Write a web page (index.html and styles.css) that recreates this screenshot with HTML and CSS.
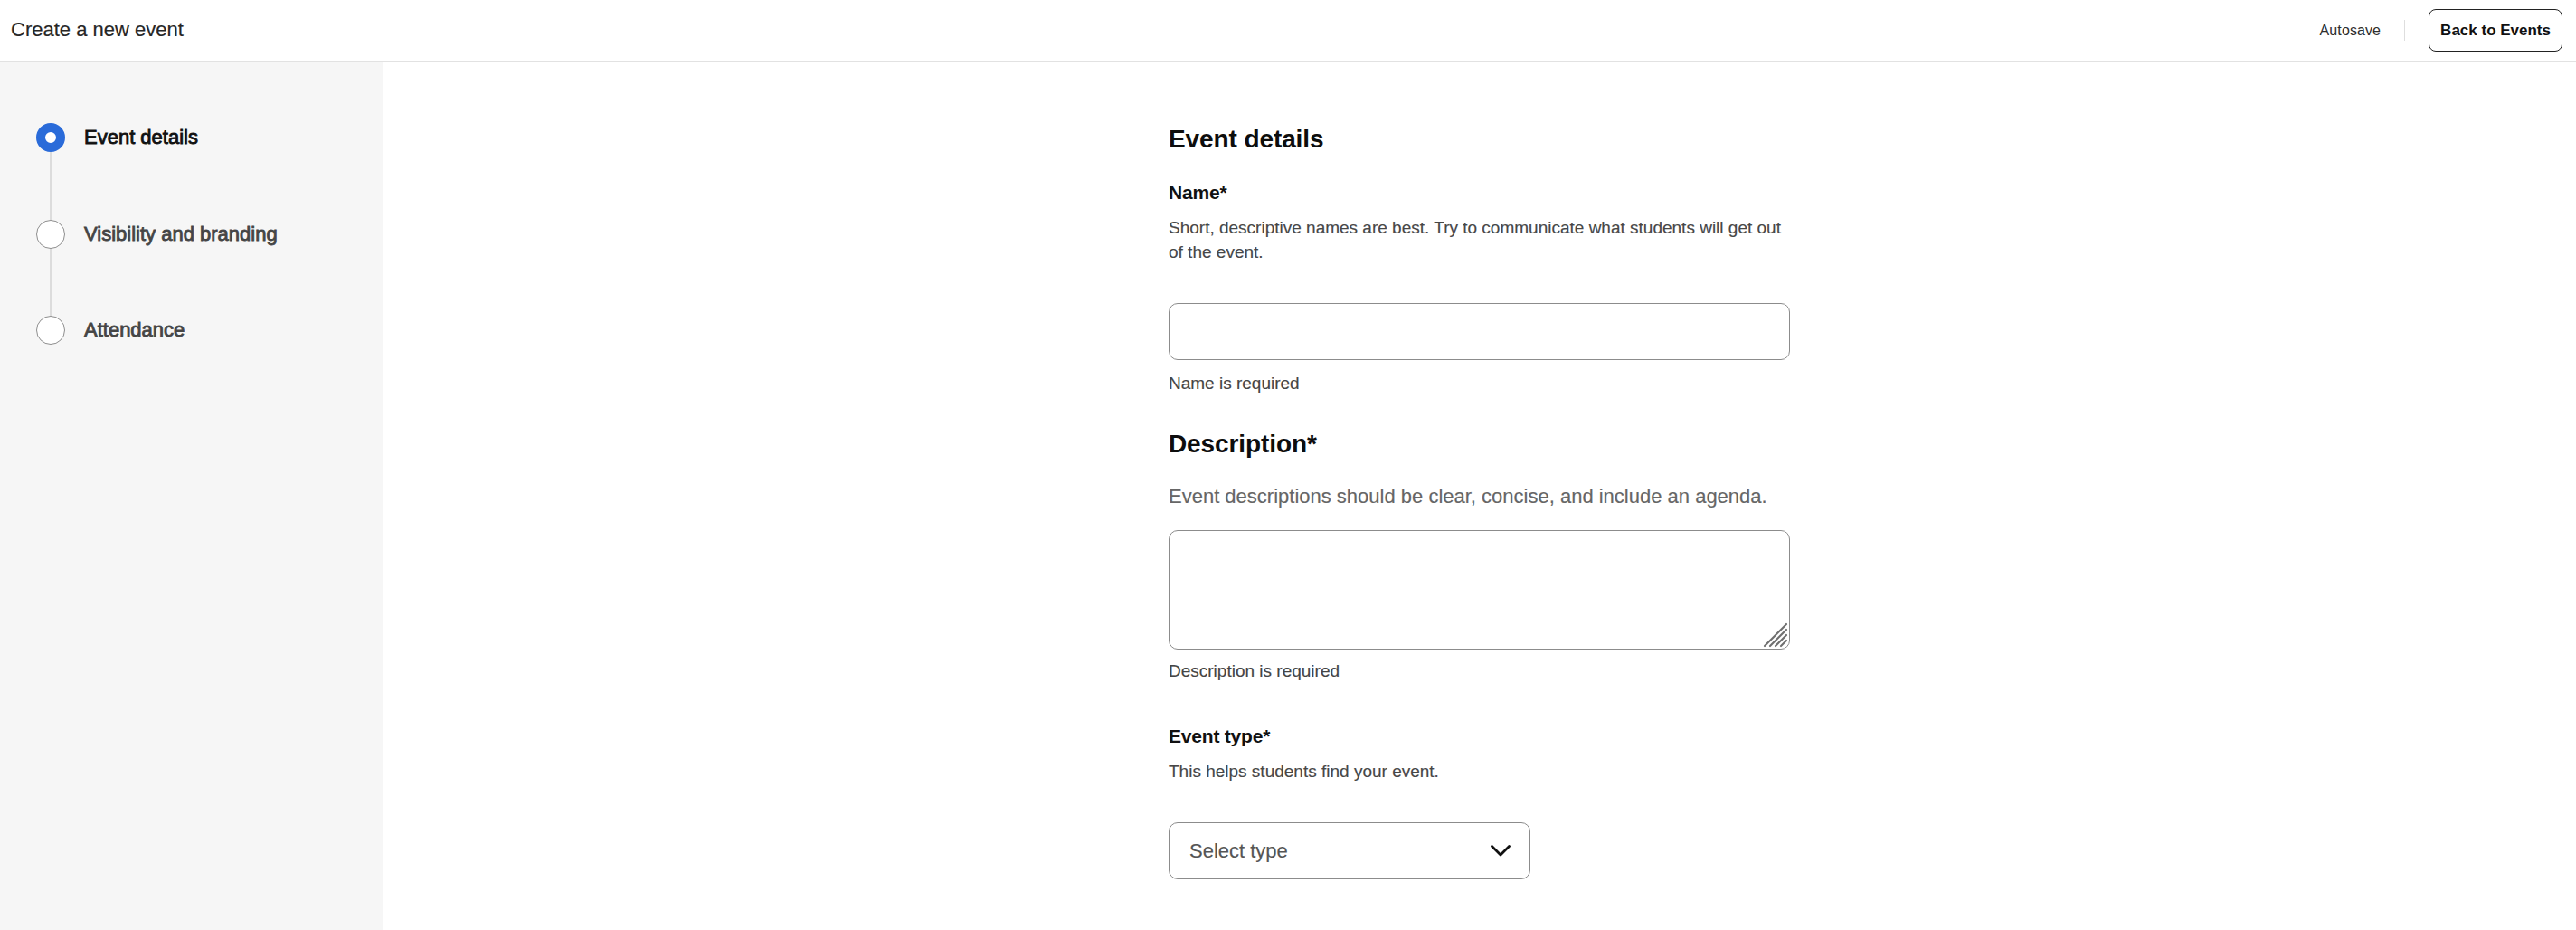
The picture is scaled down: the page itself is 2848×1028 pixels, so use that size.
FILE: index.html
```html
<!DOCTYPE html>
<html lang="en">
<head>
<meta charset="utf-8">
<title>Create a new event</title>
<link rel="stylesheet" href="styles.css">
</head>
<body>
<header class="topbar">
  <div class="topbar-title">Create a new event</div>
  <div class="topbar-actions">
    <span class="autosave">Autosave</span>
    <span class="divider"></span>
    <button class="back-btn" type="button">Back to Events</button>
  </div>
</header>
<div class="layout">
  <aside class="sidebar">
    <div class="step step-active">
      <span class="step-dot"></span>
      <span class="step-label">Event details</span>
    </div>
    <div class="step-line"></div>
    <div class="step">
      <span class="step-dot"></span>
      <span class="step-label">Visibility and branding</span>
    </div>
    <div class="step-line"></div>
    <div class="step">
      <span class="step-dot"></span>
      <span class="step-label">Attendance</span>
    </div>
  </aside>
  <main class="main">
    <form class="form">
      <h1 class="section-title">Event details</h1>
      <label class="field-label name-label" for="name">Name*</label>
      <p class="field-help">Short, descriptive names are best. Try to communicate what students will get out of the event.</p>
      <input id="name" class="text-input" type="text">
      <p class="field-error">Name is required</p>

      <h2 class="section-title desc-title">Description*</h2>
      <p class="field-help-lg">Event descriptions should be clear, concise, and include an agenda.</p>
      <div class="area-wrap">
        <textarea class="text-area"></textarea>
        <svg class="resize-grip" width="28" height="28" viewBox="0 0 28 28" aria-hidden="true">
          <g stroke="#6f6f6f" stroke-width="2.2" stroke-linecap="round">
            <line x1="2" y1="26" x2="26" y2="2"/>
            <line x1="8" y1="26" x2="26" y2="8"/>
            <line x1="14" y1="26" x2="26" y2="14"/>
            <line x1="20" y1="26" x2="26" y2="20"/>
          </g>
        </svg>
      </div>
      <p class="field-error area-error">Description is required</p>

      <div class="field-label type-label">Event type*</div>
      <p class="field-help">This helps students find your event.</p>
      <div class="select-box">
        <span class="select-text">Select type</span>
        <svg class="chevron" width="22" height="13" viewBox="0 0 22 13" aria-hidden="true">
          <polyline points="1.5,1.5 11,11 20.5,1.5" fill="none" stroke="#111" stroke-width="2.8" stroke-linecap="round" stroke-linejoin="round"/>
        </svg>
      </div>
    </form>
  </main>
</div>
</body>
</html>
```

FILE: styles.css
```css
* {
  box-sizing: border-box;
}

html, body {
  margin: 0;
  padding: 0;
  height: 100%;
}

body {
  font-family: "Liberation Sans", Arial, sans-serif;
  color: #111;
  background: #fff;
}

.topbar {
  height: 68px;
  border-bottom: 1px solid #e2e2e2;
  display: flex;
  align-items: center;
  justify-content: space-between;
  padding: 0 15px 0 12px;
}

.topbar-title {
  font-size: 22px;
  line-height: 28px;
  color: #262626;
  padding-bottom: 1px;
  -webkit-text-stroke: 0.2px #262626;
}

.topbar-actions {
  display: flex;
  align-items: center;
  gap: 26px;
}

.autosave {
  font-size: 16px;
  color: #2e2e2e;
  letter-spacing: 0.1px;
}

.divider {
  width: 1px;
  height: 23px;
  background: #dedede;
}

.back-btn {
  font-family: inherit;
  font-size: 17px;
  font-weight: 700;
  color: #111;
  background: #fff;
  border: 1px solid #222;
  border-radius: 8px;
  height: 47px;
  padding: 0 12px;
  cursor: pointer;
}

.layout {
  display: flex;
  min-height: calc(100% - 68px);
}

.sidebar {
  width: 423px;
  flex-shrink: 0;
  background: #f6f6f6;
  padding: 68px 0 0 40px;
}

.step {
  display: flex;
  align-items: center;
  gap: 21px;
  height: 32px;
}

.step-dot {
  width: 32px;
  height: 32px;
  border-radius: 50%;
  background: #fff;
  border: 1px solid #8e8e8e;
  flex-shrink: 0;
}

.step-active .step-dot {
  border: 10px solid #2a6bd9;
  background: #fff;
}

.step-label {
  font-size: 22px;
  font-weight: 400;
  letter-spacing: 0;
  color: #454545;
  line-height: 28px;
  -webkit-text-stroke: 0.85px #454545;
}

.step-active .step-label {
  color: #111;
  -webkit-text-stroke: 0.85px #111;
}

.step-line {
  width: 2px;
  height: 74.5px;
  margin-left: 15px;
  background: #dcdcdc;
}

.main {
  flex: 1;
  display: flex;
  justify-content: center;
}

.form {
  width: 687px;
  padding-top: 69px;
  display: flex;
  flex-direction: column;
  align-items: flex-start;
}

.section-title {
  font-size: 28px;
  font-weight: 700;
  line-height: 34px;
  margin: 0;
  color: #0d0d0d;
  letter-spacing: -0.1px;
}

.field-label {
  font-size: 21px;
  font-weight: 700;
  line-height: 28px;
  color: #111;
  letter-spacing: -0.2px;
}

.name-label {
  margin-top: 28px;
}

.field-help {
  font-size: 19px;
  line-height: 27px;
  color: #474747;
  margin: 11px 0 0;
  -webkit-text-stroke: 0.15px #474747;
}

.text-input {
  display: block;
  width: 100%;
  height: 63px;
  margin-top: 43px;
  border: 1px solid #8c8c8c;
  border-radius: 10px;
  background: #fff;
  font-family: inherit;
  font-size: 19px;
  padding: 0 20px;
  outline: none;
}

.field-error {
  font-size: 19px;
  line-height: 27px;
  color: #454545;
  margin: 12px 0 0;
  -webkit-text-stroke: 0.15px #454545;
}

.desc-title {
  margin-top: 37px;
}

.field-help-lg {
  font-size: 22px;
  line-height: 30px;
  color: #666;
  margin: 26px 0 0;
  -webkit-text-stroke: 0.15px #666;
}

.area-wrap {
  position: relative;
  width: 100%;
  margin-top: 22px;
}

.text-area {
  display: block;
  width: 100%;
  height: 132px;
  border: 1px solid #8c8c8c;
  border-radius: 10px;
  background: #fff;
  font-family: inherit;
  font-size: 19px;
  padding: 12px 20px;
  resize: none;
  outline: none;
}

.resize-grip {
  position: absolute;
  right: 2px;
  bottom: 2px;
  pointer-events: none;
}

.area-error {
  margin-top: 10px;
}

.type-label {
  margin-top: 45px;
}

.select-box {
  width: 400px;
  height: 63px;
  margin-top: 43px;
  border: 1px solid #8c8c8c;
  border-radius: 10px;
  background: #fff;
  display: flex;
  align-items: center;
  justify-content: space-between;
  padding: 0 21px 0 22px;
}

.select-text {
  font-size: 22px;
  color: #555;
  -webkit-text-stroke: 0.15px #555;
}

.chevron {
  display: block;
}
```
